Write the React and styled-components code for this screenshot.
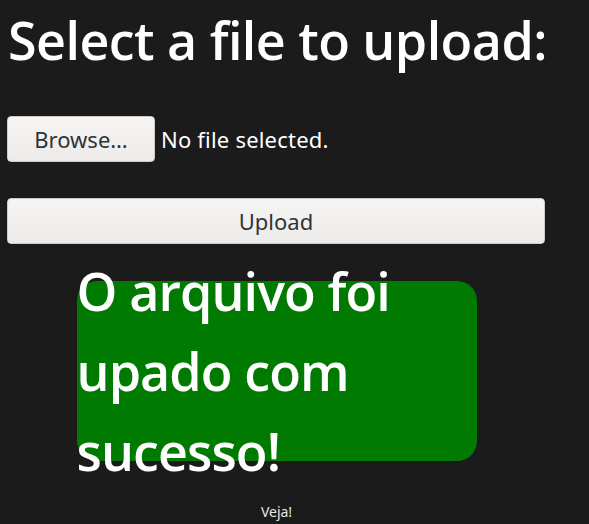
import React from "react";
import styled, { createGlobalStyle } from "styled-components";

const GlobalStyle = createGlobalStyle`
  html, body {
    margin: 0;
    background: #1c1b1b;
  }
  body {
    padding: 8px;
    font-family: "Noto Sans", "Open Sans", sans-serif;
    color: #ffffff;
  }
`;

const Page = styled.div`
  width: 537px;
  display: flex;
  flex-direction: column;
`;

const Title = styled.h1`
  margin: 0;
  font-family: "Open Sans", "Noto Sans", sans-serif;
  font-size: 52px;
  font-weight: 600;
  line-height: 64px;
  letter-spacing: -0.55px;
  color: #ffffff;
  white-space: nowrap;
`;

const FileRow = styled.div`
  display: flex;
  align-items: center;
  gap: 6px;
  margin-top: 44px;
  margin-left: -1px;
`;

const Button = styled.button`
  height: 46px;
  width: ${(p) => (p.$wide ? "538px" : "148px")};
  padding: 0;
  border: 1px solid #cfcac5;
  border-radius: 4px;
  background: linear-gradient(#f6f5f4, #edebe9);
  color: #2e3436;
  font-family: "Noto Sans", "Open Sans", sans-serif;
  font-size: 22px;
  cursor: pointer;
`;

const FileName = styled.span`
  font-family: "Noto Sans", "Open Sans", sans-serif;
  font-size: 22px;
  color: #ffffff;
  letter-spacing: 0.2px;
`;

const UploadRow = styled.div`
  margin-top: 36px;
  margin-left: -1px;
`;

const Notice = styled.div`
  align-self: center;
  width: 400px;
  height: 180px;
  margin-top: 37px;
  border-radius: 20px;
  background: #007a00;
  display: flex;
  align-items: center;
`;

const NoticeText = styled.h1`
  margin: 0;
  font-family: "Open Sans", "Noto Sans", sans-serif;
  font-size: 52px;
  font-weight: 600;
  line-height: 80px;
  letter-spacing: -0.9px;
  color: #ffffff;
`;

const Footer = styled.p`
  align-self: center;
  margin: 41px 0 0;
  font-family: "Noto Sans", "Open Sans", sans-serif;
  font-size: 14px;
  color: #e8e8e8;
`;

export default function App() {
  return (
    <>
      <GlobalStyle />
      <Page>
        <Title>Select a file to upload:</Title>
        <FileRow>
          <Button>Browse…</Button>
          <FileName>No file selected.</FileName>
        </FileRow>
        <UploadRow>
          <Button $wide>Upload</Button>
        </UploadRow>
        <Notice>
          <NoticeText>O arquivo foi upado com sucesso!</NoticeText>
        </Notice>
        <Footer>Veja!</Footer>
      </Page>
    </>
  );
}
